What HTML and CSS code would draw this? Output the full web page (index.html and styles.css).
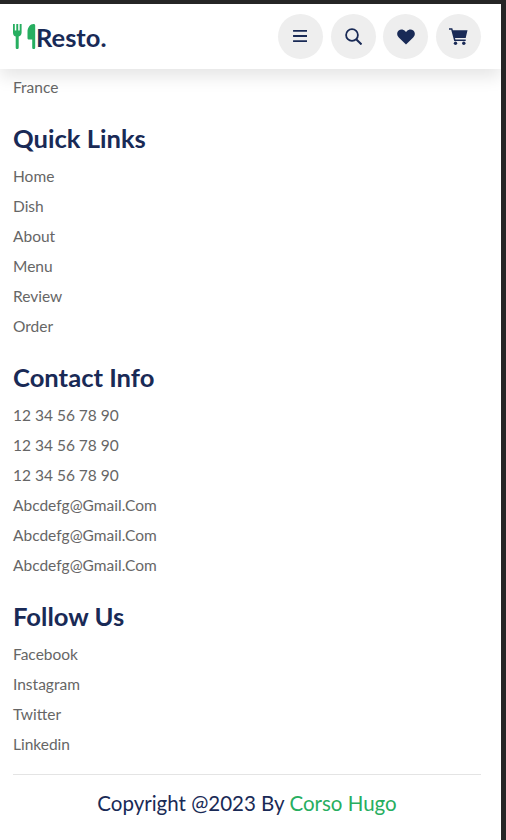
FILE: index.html
```html
<!DOCTYPE html>
<html>
<head>
    <title>Resto</title>
    <link rel="stylesheet" href="styles.css">
</head>
<body>

<div class="page">
    <header class="header">
        <a class="logo" href="#">
            <svg class="logo-icon" viewBox="0 0 23 25" width="23" height="25">
                <path d="M0 0h1.800v6.500h1.500V0h1.900v6.500h1.500V0h1.900v8.500c0 2.200-1.300 3.500-2.900 4V23.400c0 1-.6 1.600-1.500 1.600s-1.500-.6-1.500-1.600V12.500C.9 12 0 10.700 0 8.500z"/>
                <path d="M20.500 0c1.200 0 1.700.6 1.700 1.500v21.900c0 1-.6 1.600-1.500 1.600s-1.500-.6-1.500-1.600V15.500h-3c-1.200 0-1.700-.6-1.700-1.600V8c0-4.500 2.800-8 6-8z"/>
            </svg>
            <span>Resto.</span>
        </a>
        <nav class="icons">
            <a class="icon-btn" href="#">
                <svg viewBox="0 0 16 14" width="15" height="13"><path d="M0 1h15M0 6.500h15M0 12h15" stroke="#192a56" stroke-width="2" fill="none"/></svg>
            </a>
            <a class="icon-btn" href="#">
                <svg viewBox="0 0 17 17" width="17" height="17"><circle cx="7" cy="7" r="5.900" stroke="#192a56" stroke-width="1.800" fill="none"/><path d="M11.200 11.200L16.500 16.500" stroke="#192a56" stroke-width="2" fill="none"/></svg>
            </a>
            <a class="icon-btn" href="#">
                <svg viewBox="0 0 18 16" width="18" height="16"><path fill="#192a56" d="M9 15.500L1.800 8.600C-.4 6.400-.3 3.200 1.700 1.500 3.600-.1 6.400.3 8 2l1 1.100L10 2c1.600-1.700 4.400-2.100 6.300-.5 2 1.700 2.100 4.900-.1 7.100z"/></svg>
            </a>
            <a class="icon-btn" href="#">
                <svg viewBox="0 0 19 17" width="19" height="17"><path fill="#192a56" d="M0 .3h3.300l.6 2h14.600l-1.800 7.600H6l.4 1.600h10.300v1.500H5.200L2.200 1.800H0z"/><circle cx="6.500" cy="15.300" r="1.700" fill="#192a56"/><circle cx="14.800" cy="15.300" r="1.700" fill="#192a56"/></svg>
            </a>
        </nav>
    </header>

    <footer class="footer">
        <div class="box box-first">
            <a href="#">France</a>
        </div>
        <div class="box">
            <h3>Quick Links</h3>
            <a href="#">Home</a>
            <a href="#">Dish</a>
            <a href="#">About</a>
            <a href="#">Menu</a>
            <a href="#">Review</a>
            <a href="#">Order</a>
        </div>
        <div class="box">
            <h3>Contact Info</h3>
            <a href="#">12 34 56 78 90</a>
            <a href="#">12 34 56 78 90</a>
            <a href="#">12 34 56 78 90</a>
            <a href="#">Abcdefg@Gmail.Com</a>
            <a href="#">Abcdefg@Gmail.Com</a>
            <a href="#">Abcdefg@Gmail.Com</a>
        </div>
        <div class="box box-last">
            <h3>Follow Us</h3>
            <a href="#">Facebook</a>
            <a href="#">Instagram</a>
            <a href="#">Twitter</a>
            <a href="#">Linkedin</a>
        </div>
        <p class="credit">Copyright @2023 By <span>Corso Hugo</span></p>
    </footer>
</div>

</body>
</html>
```

FILE: styles.css
```css
html, body {
    margin: 0;
    height: 840px;
    overflow: hidden;
    background-color: #252525;
}

body {
    font-family: "Lato", "Noto Sans", sans-serif;
    padding: 4px 5px 0 0;
    box-sizing: border-box;
}

a {
    text-decoration: none;
}

.page {
    height: 836px;
    overflow: hidden;
    background-color: #fff;
}

.header {
    height: 65px;
    padding: 0 20px 0 13px;
    display: flex;
    justify-content: space-between;
    align-items: center;
    background-color: #fff;
    box-shadow: 0 8px 16px rgba(0, 0, 0, 0.1);
    position: relative;
}

.logo {
    display: flex;
    align-items: center;
    font-size: 25.500px;
    font-weight: 700;
    color: #192a56;
}

.logo-icon {
    fill: #27ae60;
    margin-top: -1px;
}

.icons {
    display: flex;
    gap: 7.600px;
}

.icon-btn {
    width: 45px;
    height: 45px;
    border-radius: 50%;
    background-color: #eee;
    display: flex;
    justify-content: center;
    align-items: center;
}

.footer {
    padding: 0 20px 0 13px;
}

.box {
    margin-bottom: 18px;
}

.box-first {
    margin-top: 3px;
}

.box-last {
    margin-bottom: 15px;
}

.box h3 {
    margin: 0 0 5px;
    font-size: 25.600px;
    line-height: 36px;
    font-weight: 700;
    color: #192a56;
}

.box a {
    display: block;
    font-size: 15.500px;
    line-height: 30px;
    color: #666;
}

.credit {
    margin: 0;
    padding-top: 15px;
    border-top: 1px solid #e4e4e4;
    text-align: center;
    font-size: 20.500px;
    line-height: 26px;
    color: #192a56;
}

.credit span {
    color: #27ae60;
}
```
